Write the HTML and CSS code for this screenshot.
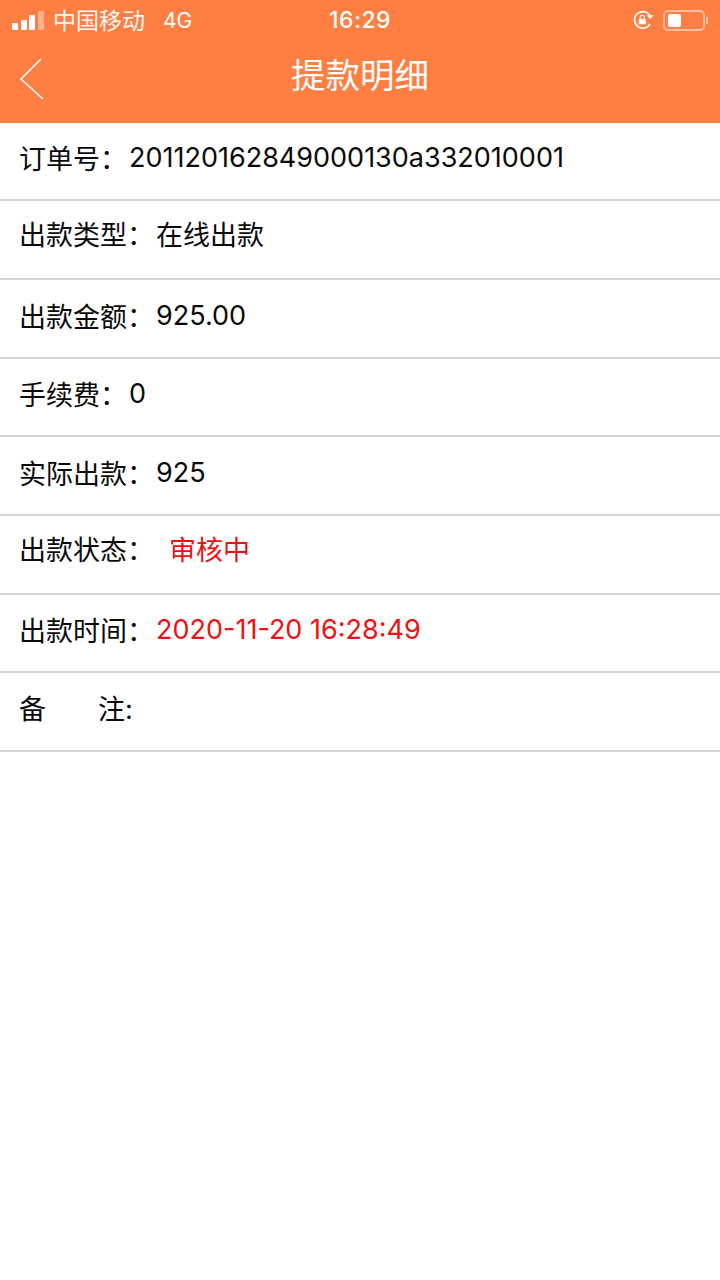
FILE: index.html
```html
<!DOCTYPE html>
<html lang="zh-CN">
<head>
  <meta charset="UTF-8">
  <meta name="viewport" content="width=device-width, initial-scale=1">
  <title>提款明细</title>
  <link rel="stylesheet" href="styles.css">
</head>
<body>
  <div class="top">
    <div class="status">
      <div class="status-left">
        <div class="signal"><i class="s1"></i><i class="s2"></i><i class="s3"></i><i class="s4"></i></div>
        <span class="carrier">中国移动</span>
        <span class="net">4G</span>
      </div>
      <div class="clock">16:29</div>
      <div class="status-right">
        <svg class="lock" width="24" height="24" viewBox="0 0 22 22">
          <path d="M17.5 14.5A7.6 7.6 0 1 1 17.6 7.5" fill="none" stroke="#fff" stroke-width="1.5"/>
          <path d="M14.6 9.4h6l-3-3.6z" fill="#fff" transform="rotate(180 17.6 8)"/>
          <rect x="7" y="10" width="6.6" height="5" rx="0.8" fill="#fff"/>
          <path d="M8.4 10V8.6a1.9 1.9 0 0 1 3.8 0V10" fill="none" stroke="#fff" stroke-width="1"/>
        </svg>
        <div class="battery"><div class="charge"></div></div>
        <div class="battery-tip"></div>
      </div>
    </div>
    <div class="nav">
      <svg class="back" width="26" height="44" viewBox="0 0 26 44">
        <path d="M23 2L3 22l22 20" fill="none" stroke="#fff" stroke-width="1.6"/>
      </svg>
      <h1>提款明细</h1>
    </div>
  </div>

  <div class="list">
    <div class="row">订单号：<span class="val">201120162849000130a332010001</span></div>
    <div class="row cjk">出款类型：<span class="val">在线出款</span></div>
    <div class="row">出款金额：<span class="val">925.00</span></div>
    <div class="row">手续费：<span class="val">0</span></div>
    <div class="row">实际出款：<span class="val">925</span></div>
    <div class="row cjk">出款状态：<span class="red state">审核中</span></div>
    <div class="row">出款时间：<span class="red val">2020-11-20 16:28:49</span></div>
    <div class="row cjk-note"><span>备</span><span class="note">注:</span></div>
  </div>
</body>
</html>
```

FILE: styles.css
```css
* { box-sizing: border-box; }
body {
  margin: 0;
  background: #ffffff;
  color: #0a0a0a;
  font-family: Inter, "Noto Sans CJK SC", sans-serif;
}
.top {
  height: 122.5px;
  background: #ff7e42;
  color: #ffffff;
}
.status {
  height: 40px;
  padding: 0 12px;
  display: grid;
  grid-template-columns: 1fr auto 1fr;
  align-items: center;
}
.status-left {
  display: flex;
  align-items: center;
}
.signal {
  display: flex;
  align-items: flex-end;
  gap: 2.6px;
  height: 19px;
  width: 32px;
}
.signal i {
  flex: none;
  width: 6px;
  background: #ffffff;
  border-radius: 1px;
}
.s1 { height: 7px; }
.s2 { height: 10px; }
.s3 { height: 15px; }
.s4 { height: 19px; opacity: 0.4; }
.carrier {
  margin: -3px 0 0 9px;
  font-size: 23px;
  opacity: 0.95;
}
.net {
  margin-left: 18px;
  font-size: 21px;
}
.clock {
  font-size: 23px;
  font-weight: 500;
  letter-spacing: 0.5px;
}
.status-right {
  display: flex;
  align-items: center;
  justify-content: flex-end;
}
.lock { margin-right: 8px; }
.battery {
  width: 42px;
  height: 21px;
  padding: 2px 3px;
  border: 2px solid rgba(255, 255, 255, 0.5);
  border-radius: 5px;
}
.charge {
  width: 13px;
  height: 13px;
  background: #ffffff;
  border-radius: 2px;
}
.battery-tip {
  width: 2px;
  height: 7px;
  margin-left: 1px;
  background: rgba(255, 255, 255, 0.5);
}
.nav {
  position: relative;
  height: 82.5px;
  display: flex;
  align-items: center;
  justify-content: center;
}
.nav h1 {
  margin: -16px 0 0;
  font-size: 34.5px;
  font-weight: 400;
}
.back {
  position: absolute;
  left: 17.5px;
  top: 17px;
}
.row {
  height: 78.7px;
  padding: 0 20px 6px 19px;
  display: flex;
  align-items: center;
  font-size: 27px;
  border-bottom: 2px solid #d4d4d4;
  white-space: pre;
}
.cjk { padding-bottom: 12px; }
.cjk-note { padding-bottom: 9px; }
.val { margin-left: 2px; }
.red { color: #ee1111; }
.state { margin-left: 15px; }
.note { margin-left: 52px; }
```
